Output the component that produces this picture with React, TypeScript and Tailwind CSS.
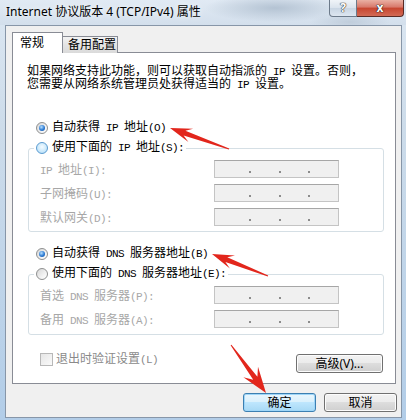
import React from "react";

const body = "font-['Liberation_Mono','Noto_Sans_CJK_SC',sans-serif] text-[12px] leading-[12px]";
const ui = "font-['Noto_Sans','Noto_Sans_CJK_SC',sans-serif]";

// SimSun-like: narrow the half-width runs to ~6px per char
function T({ s }: { s: string }) {
  const parts = s.split(/([\x20-\x7e]+)/);
  return (
    <>
      {parts.map((p, i) =>
        /^[\x20-\x7e]+$/.test(p) ? (
          <span key={i} className="text-[11px] tracking-[-0.6px]">
            {p}
          </span>
        ) : (
          p
        )
      )}
    </>
  );
}

function Radio({ on, hot }: { on?: boolean; hot?: boolean }) {
  return (
    <span
      className={
        hot
          ? "flex h-[12px] w-[12px] shrink-0 items-center justify-center rounded-full border border-[#5b9bd0] bg-[radial-gradient(circle_at_50%_40%,#f4fbff,#c9e8fb_60%,#a6d4f3)]"
          : "flex h-[12px] w-[12px] shrink-0 items-center justify-center rounded-full border border-[#8e8f8f] bg-[linear-gradient(135deg,#d6d6d6,#f6f6f6_70%,#ffffff)]"
      }
    >
      {on && (
        <span className="h-[6px] w-[6px] rounded-full bg-[radial-gradient(circle_at_40%_35%,#b8e0ff,#2a7ad3_55%,#114a9a)]" />
      )}
    </span>
  );
}

function RadioRow({ on, hot, label }: { on?: boolean; hot?: boolean; label: string }) {
  return (
    <div className="flex h-[12px] items-center gap-[4px] text-black">
      <Radio on={on} hot={hot} />
      <span className="whitespace-nowrap">
        <T s={label} />
      </span>
    </div>
  );
}

function IpBox() {
  return (
    <div className="flex h-[18px] w-[125px] items-end border border-[#c4c4c4] border-t-[#a6a6a6] bg-[#f0f0f0] pb-[4px] pl-[34px]">
      <span className="w-[30px]">
        <span className="block h-[2px] w-[2px] bg-[#8c8c8c]" />
      </span>
      <span className="w-[30px]">
        <span className="block h-[2px] w-[2px] bg-[#8c8c8c]" />
      </span>
      <span className="w-[30px]">
        <span className="block h-[2px] w-[2px] bg-[#8c8c8c]" />
      </span>
    </div>
  );
}

function IpRow({ label }: { label: string }) {
  return (
    <div className="flex items-center">
      <span className="w-[174px] whitespace-nowrap pt-[3px] text-[#a7a7a7]">
        <T s={label} />
      </span>
      <IpBox />
    </div>
  );
}

function Btn({ children, primary, w }: { children: React.ReactNode; primary?: boolean; w: string }) {
  return (
    <div
      className={
        (primary
          ? "border-[#3c7fb1] bg-[linear-gradient(#eaf6fd_0%,#d9f0fc_50%,#bee6fd_50%,#a7d9f5_100%)] shadow-[inset_0_0_0_1px_#9fd6f8] "
          : "border-[#707070] bg-[linear-gradient(#f2f2f2_0%,#ebebeb_50%,#dddddd_50%,#cfcfcf_100%)] shadow-[inset_0_0_0_1px_#fcfcfc] ") +
        w +
        " flex h-[19px] shrink-0 items-center justify-center whitespace-nowrap rounded-[3px] border text-[12px] leading-[12px] text-black " +
        ui
      }
    >
      {children}
    </div>
  );
}

function arrow(x1: number, y1: number, x2: number, y2: number, head: number, hw: number) {
  const dx = x2 - x1;
  const dy = y2 - y1;
  const L = Math.hypot(dx, dy);
  const ux = dx / L;
  const uy = dy / L;
  const px = -uy;
  const py = ux;
  const bx = x2 - ux * head;
  const by = y2 - uy * head;
  const sx = x2 - ux * head * 0.7;
  const sy = y2 - uy * head * 0.7;
  const w0 = 0.5;
  const w1 = 2.6;
  const pts = [
    [x1 + px * w0, y1 + py * w0],
    [sx + px * w1, sy + py * w1],
    [bx + px * hw, by + py * hw],
    [x2, y2],
    [bx - px * hw, by - py * hw],
    [sx - px * w1, sy - py * w1],
    [x1 - px * w0, y1 - py * w0],
  ];
  return pts.map((p) => p[0].toFixed(1) + "," + p[1].toFixed(1)).join(" ");
}

export default function App() {
  return (
    <div className="relative h-[420px] w-[406px] overflow-hidden bg-[linear-gradient(180deg,#dce7f2_0%,#cddcea_30%,#b2cde8_100%)]">
      {/* title bar */}
      <div className="flex h-[25px] items-start bg-[radial-gradient(ellipse_70px_14px_at_275px_8px,#b4c3d3,transparent),radial-gradient(ellipse_40px_10px_at_350px_22px,#c0cddb,transparent),linear-gradient(#e1eaf4,#d3dfec)]">
        <span className={"pl-[6px] pt-[5px] text-[12px] leading-[14px] text-black [text-shadow:0_0_6px_#ffffff] " + ui}>
          Internet 协议版本 4 (TCP/IPv4) 属性
        </span>
        <div className="ml-auto mr-[2px] flex">
          <div className="flex h-[17px] w-[28px] items-center justify-center rounded-bl-[4px] border border-t-0 border-[#6c7a8a] bg-[linear-gradient(#f0f4f8,#dae3ed_50%,#c8d5e3_50%,#dde6f0)] text-[12px] font-bold leading-[12px] text-white [text-shadow:0_0_1px_#333,0_0_1px_#333,0_0_1px_#333]">
            ?
          </div>
          <div className="flex h-[17px] w-[47px] items-center justify-center rounded-br-[4px] border border-l-0 border-t-0 border-[#5a2a24] bg-[linear-gradient(#eab0a3,#d8786a_45%,#c7452f_50%,#d26a55)] text-[12px] font-bold leading-[12px] text-white [text-shadow:0_0_1px_#222,0_0_1px_#222,0_0_1px_#222]">
            x
          </div>
        </div>
      </div>

      {/* client area */}
      <div className="ml-[5px] mr-[4px] h-[393px] border border-[#8796a8] bg-[#f0f0f0] pt-[6px]">
        {/* tabs */}
        <div className={"relative z-10 ml-[6px] flex h-[21px] items-end text-[12px] leading-[14px] text-black " + ui}>
          <div className="h-[21px] w-[51px] border border-b-0 border-[#898c95] bg-white pl-[7px] pt-[3px]">常规</div>
          <div className="-ml-[1px] h-[17px] w-[56px] border border-b-0 border-[#898c95] bg-[linear-gradient(#f3f3f3,#e4e4e4_50%,#dadada)] pl-[5px] pt-[1px]">
            备用配置
          </div>
        </div>

        {/* panel */}
        <div className={"-mt-[1px] ml-[6px] h-[332px] w-[384px] border border-[#898c95] bg-white pl-[14px] " + body}>
          <p className="mt-[13px] leading-[13px] text-black">
            <T s="如果网络支持此功能，则可以获取自动指派的 IP 设置。否则，" />
            <br />
            <T s="您需要从网络系统管理员处获得适当的 IP 设置。" />
          </p>

          <div className="ml-[9px] mt-[30px]">
            <RadioRow on label="自动获得 IP 地址(O)" />
          </div>

          <fieldset className="ml-[1px] mt-[8px] w-[356px] rounded-[3px] border border-[#d5dfe5] pb-[5px] pl-[5px]">
            <legend className="px-[2px]">
              <RadioRow hot label="使用下面的 IP 地址(S):" />
            </legend>
            <div className="ml-[6px] mt-[6px] flex flex-col gap-[6px]">
              <IpRow label="IP 地址(I):" />
              <IpRow label="子网掩码(U):" />
              <IpRow label="默认网关(D):" />
            </div>
          </fieldset>

          <div className="ml-[9px] mt-[16px]">
            <RadioRow on label="自动获得 DNS 服务器地址(B)" />
          </div>

          <fieldset className="ml-[1px] mt-[8px] w-[356px] rounded-[3px] border border-[#d5dfe5] pb-[6px] pl-[5px]">
            <legend className="px-[2px]">
              <RadioRow label="使用下面的 DNS 服务器地址(E):" />
            </legend>
            <div className="ml-[6px] mt-[6px] flex flex-col gap-[6px]">
              <IpRow label="首选 DNS 服务器(P):" />
              <IpRow label="备用 DNS 服务器(A):" />
            </div>
          </fieldset>

          <div className="ml-[13px] mr-[12px] mt-[18px] flex items-start">
            <div className="flex items-center gap-[3px] whitespace-nowrap">
              <span className="h-[13px] w-[13px] shrink-0 border border-[#b8b8b8] bg-[linear-gradient(135deg,#e6e6e6,#fafafa)]" />
              <span className="pt-[1px] text-[#8a8a8a]">
                <T s="退出时验证设置(L)" />
              </span>
            </div>
            <div className="ml-auto mt-[1px]">
              <Btn w="w-[87px]">高级(V)...</Btn>
            </div>
          </div>
        </div>

        {/* buttons */}
        <div className="mt-[9px] flex gap-[8px] pl-[237px]">
          <Btn primary w="w-[73px]">
            确定
          </Btn>
          <Btn w="w-[73px]">取消</Btn>
        </div>
      </div>

      {/* annotation arrows */}
      <svg className="pointer-events-none absolute left-0 top-0" width="406" height="420">
        <polygon points={arrow(229, 149, 170, 128, 22, 7)} fill="#e2261c" />
        <polygon points={arrow(268, 276, 212, 254, 22, 7)} fill="#e2261c" />
        <polygon points={arrow(231, 345, 266, 393, 26, 9)} fill="#e2261c" />
      </svg>
    </div>
  );
}
